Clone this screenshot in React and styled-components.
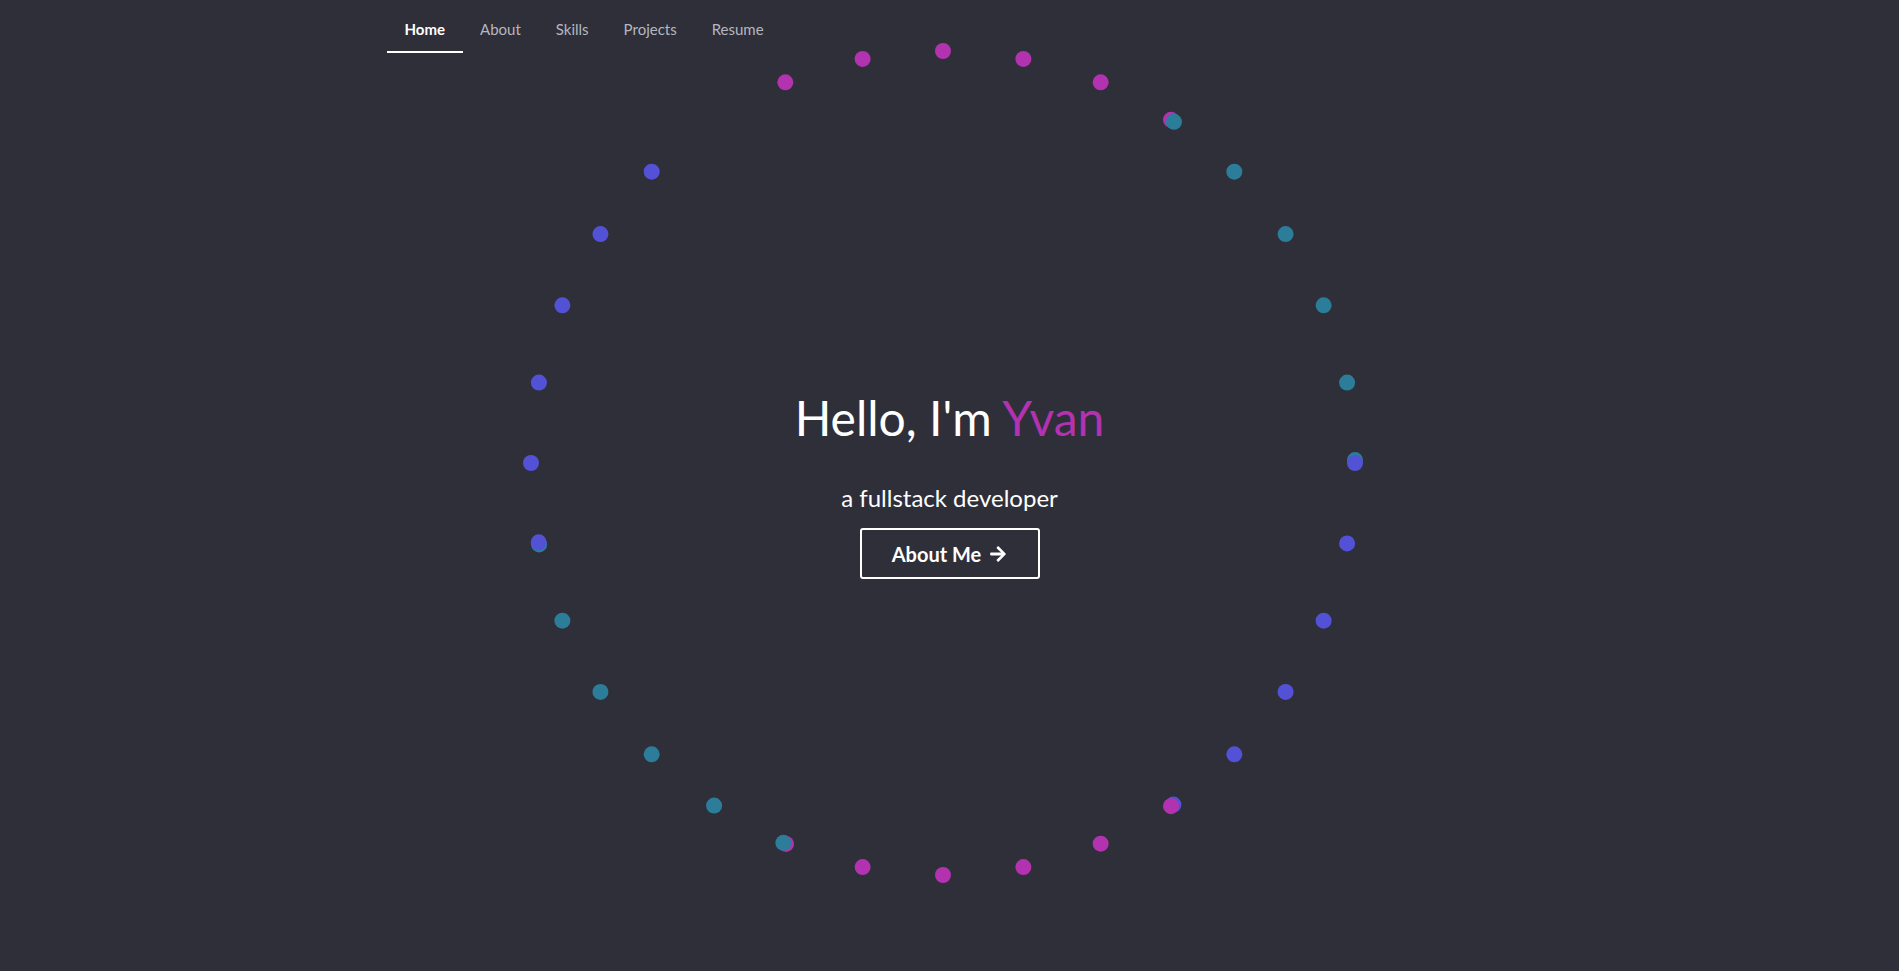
import React from "react";
import styled, { createGlobalStyle } from "styled-components";
import { FaArrowRight } from "react-icons/fa";

const GlobalStyle = createGlobalStyle`
  html, body {
    margin: 0;
    padding: 0;
    background-color: #2f2f3a;
    font-family: Lato, "Open Sans", sans-serif;
  }
`;

const tabs = ["Home", "About", "Skills", "Projects", "Resume"];

// ring of dots, angles in degrees clockwise from top
const groups = [
  { color: "#b232b0", angles: [-22.5, -11.25, 0, 11.25, 22.5, 33.6] },
  { color: "#2b7d99", angles: [34.1, 45, 56.25, 67.5, 78.75, 89.6] },
  { color: "#5352d6", angles: [90, 101.25, 112.5, 123.75, 135, 146.0] },
  { color: "#b232b0", angles: [146.4, 157.5, 168.75, 180, 191.25, 202.4] },
  { color: "#2b7d99", angles: [202.8, 213.75, 225, 236.25, 247.5, 258.6] },
  { color: "#5352d6", angles: [258.9, 270, 281.25, 292.5, 303.75, 315] },
];

const CX = 943;
const CY = 463;
const R = 412;

const DotRing = () => (
  <Ring width="1899" height="971" viewBox="0 0 1899 971">
    {groups.map((g, gi) =>
      g.angles.map((a) => {
        const rad = (a * Math.PI) / 180;
        return (
          <circle
            key={gi + "-" + a}
            cx={CX + R * Math.sin(rad)}
            cy={CY - R * Math.cos(rad)}
            r="8"
            fill={g.color}
          />
        );
      })
    )}
  </Ring>
);

const App = () => {
  return (
    <Page>
      <GlobalStyle />
      <DotRing />
      <NavBar>
        <TabList>
          {tabs.map((t, i) => (
            <Tab key={t} active={i === 0}>
              {t}
            </Tab>
          ))}
        </TabList>
      </NavBar>
      <Hero>
        <Title>
          Hello, I'm <Name>Yvan</Name>
        </Title>
        <Subtitle>a fullstack developer</Subtitle>
        <AboutButton>
          About Me <FaArrowRight size={18} />
        </AboutButton>
      </Hero>
    </Page>
  );
};

const Page = styled.div`
  position: relative;
  height: 100vh;
  overflow: hidden;
  display: flex;
  flex-direction: column;
`;
const Ring = styled.svg`
  position: absolute;
  top: 0;
  left: 0;
  pointer-events: none;
`;
const NavBar = styled.nav`
  position: relative;
  width: 1125px;
  margin: 0 auto;
  padding-top: 7px;
`;
const TabList = styled.div`
  display: flex;
`;
const Tab = styled.div`
  height: 46px;
  padding: 0 17.5px;
  display: flex;
  align-items: center;
  box-sizing: border-box;
  font-size: 15px;
  font-weight: ${(p) => (p.active ? 700 : 400)};
  color: ${(p) => (p.active ? "#ffffff" : "#b4b7bf")};
  border-bottom: 2px solid ${(p) => (p.active ? "#ffffff" : "transparent")};
  cursor: pointer;
`;
const Hero = styled.div`
  position: relative;
  display: flex;
  flex-direction: column;
  align-items: center;
  padding-top: 336px;
`;
const Title = styled.h1`
  margin: 0;
  font-size: 48px;
  font-weight: 400;
  line-height: 1.2;
  color: #ffffff;
`;
const Name = styled.span`
  color: #b232b0;
`;
const Subtitle = styled.div`
  margin-top: 37px;
  font-size: 24px;
  line-height: 1.2;
  color: #ffffff;
`;
const AboutButton = styled.button`
  margin-top: 16px;
  width: 180px;
  height: 51px;
  display: flex;
  align-items: center;
  justify-content: center;
  gap: 8px;
  background: transparent;
  border: 2px solid #ffffff;
  border-radius: 3px;
  color: #ffffff;
  font-family: Lato, sans-serif;
  font-size: 20px;
  font-weight: 700;
  cursor: pointer;
`;

export default App;
